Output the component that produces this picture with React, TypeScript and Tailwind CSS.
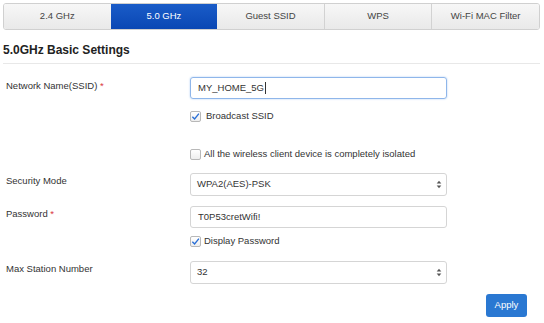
import React from "react";

const font = { fontFamily: '"Liberation Sans", Arial, sans-serif' };

function Check({ checked }: { checked: boolean }) {
  return (
    <span className="flex h-[11px] w-[11px] items-center justify-center rounded-[2px] border border-[#b8b8b8] bg-gradient-to-b from-white to-[#eeeeee]">
      {checked && (
        <svg width="9" height="9" viewBox="0 0 10 10">
          <path d="M1.5 5.2 L4 7.8 L8.8 1.8" fill="none" stroke="#2a6fd6" strokeWidth="1.5" />
        </svg>
      )}
    </span>
  );
}

function Arrows() {
  return (
    <svg width="6" height="9" viewBox="0 0 6 9">
      <path d="M3 0.8 L5.3 3.6 L0.7 3.6 Z" fill="#555" />
      <path d="M3 8.2 L5.3 5.4 L0.7 5.4 Z" fill="#555" />
    </svg>
  );
}

export default function App() {
  const tabs = ["2.4 GHz", "5.0 GHz", "Guest SSID", "WPS", "Wi-Fi MAC Filter"];
  return (
    <div className="h-[323px] w-[544px] bg-white text-[#333]" style={font}>
      <div className="px-[3px] pt-[3px]">
        <div className="flex h-[27px] w-[537px] overflow-hidden rounded-[3px] border border-[#d0d0d0]">
          {tabs.map((t, i) =>
            i === 1 ? (
              <div
                key={t}
                className="flex flex-1 items-center justify-center bg-gradient-to-b from-[#1a5cc8] to-[#0a47b4] text-[9.5px] text-white"
              >
                {t}
              </div>
            ) : (
              <div
                key={t}
                className={`flex flex-1 items-center justify-center bg-gradient-to-b from-[#f7f7f7] to-[#e9e9e9] text-[9.5px] text-[#444] ${i > 0 && i !== 2 ? "border-l border-[#d2d2d2]" : ""}`}
              >
                {t}
              </div>
            )
          )}
        </div>
        <div className="mt-[12px] text-[12px] font-bold leading-[16px] text-[#222]">5.0GHz Basic Settings</div>
        <div className="mt-[5px] h-px w-[537px] bg-[#e8e8e8]" />

        <div className="mt-[13px] flex">
          <div className="w-[187px] pl-[3px] pt-[2px] text-[9.5px] leading-[14px]">
            Network Name(SSID) <span className="text-[#d9363e]">*</span>
          </div>
          <div className="flex h-[22px] w-[257px] items-center rounded-[3px] border border-[#8fb6ea] px-[7px] text-[9.5px] shadow-[0_0_2px_#a9c9f2]">
            MY_HOME_5G<span className="ml-px h-[12px] w-px bg-[#333]" />
          </div>
        </div>

        <div className="mt-[10px] flex h-[14px] items-center pl-[187px] text-[9.5px]">
          <Check checked />
          <span className="ml-[5px]">Broadcast SSID</span>
        </div>

        <div className="mt-[24px] flex h-[14px] items-center pl-[187px] text-[9.5px]">
          <Check checked={false} />
          <span className="ml-[3px]">All the wireless client device is completely isolated</span>
        </div>

        <div className="mt-[12px] flex">
          <div className="w-[187px] pl-[3px] pt-[1px] text-[9.5px] leading-[14px]">Security Mode</div>
          <div className="flex h-[23px] w-[257px] items-center justify-between rounded-[3px] border border-[#d5d5d5] pl-[6px] pr-[4px] text-[9.5px]">
            <span>WPA2(AES)-PSK</span>
            <Arrows />
          </div>
        </div>

        <div className="mt-[10px] flex">
          <div className="w-[187px] pl-[3px] pt-[1px] text-[9.5px] leading-[14px]">
            Password <span className="text-[#d9363e]">*</span>
          </div>
          <div className="flex h-[22px] w-[257px] items-center rounded-[3px] border border-[#d5d5d5] px-[7px] text-[9.5px]">
            T0P53cretWifi!
          </div>
        </div>

        <div className="mt-[6px] flex h-[14px] items-center pl-[187px] text-[9.5px]">
          <Check checked />
          <span className="ml-[3px]">Display Password</span>
        </div>

        <div className="mt-[13px] flex">
          <div className="w-[187px] pl-[3px] pt-[1px] text-[9.5px] leading-[14px]">Max Station Number</div>
          <div className="flex h-[23px] w-[257px] items-center justify-between rounded-[3px] border border-[#d5d5d5] pl-[6px] pr-[4px] text-[9.5px]">
            <span>32</span>
            <Arrows />
          </div>
        </div>

        <div className="mt-[10px] flex justify-end pr-[14px]">
          <div className="flex h-[23px] w-[41px] items-center justify-center rounded-[3px] bg-[#2a78d2] text-[9.5px] text-white">
            Apply
          </div>
        </div>
      </div>
    </div>
  );
}
